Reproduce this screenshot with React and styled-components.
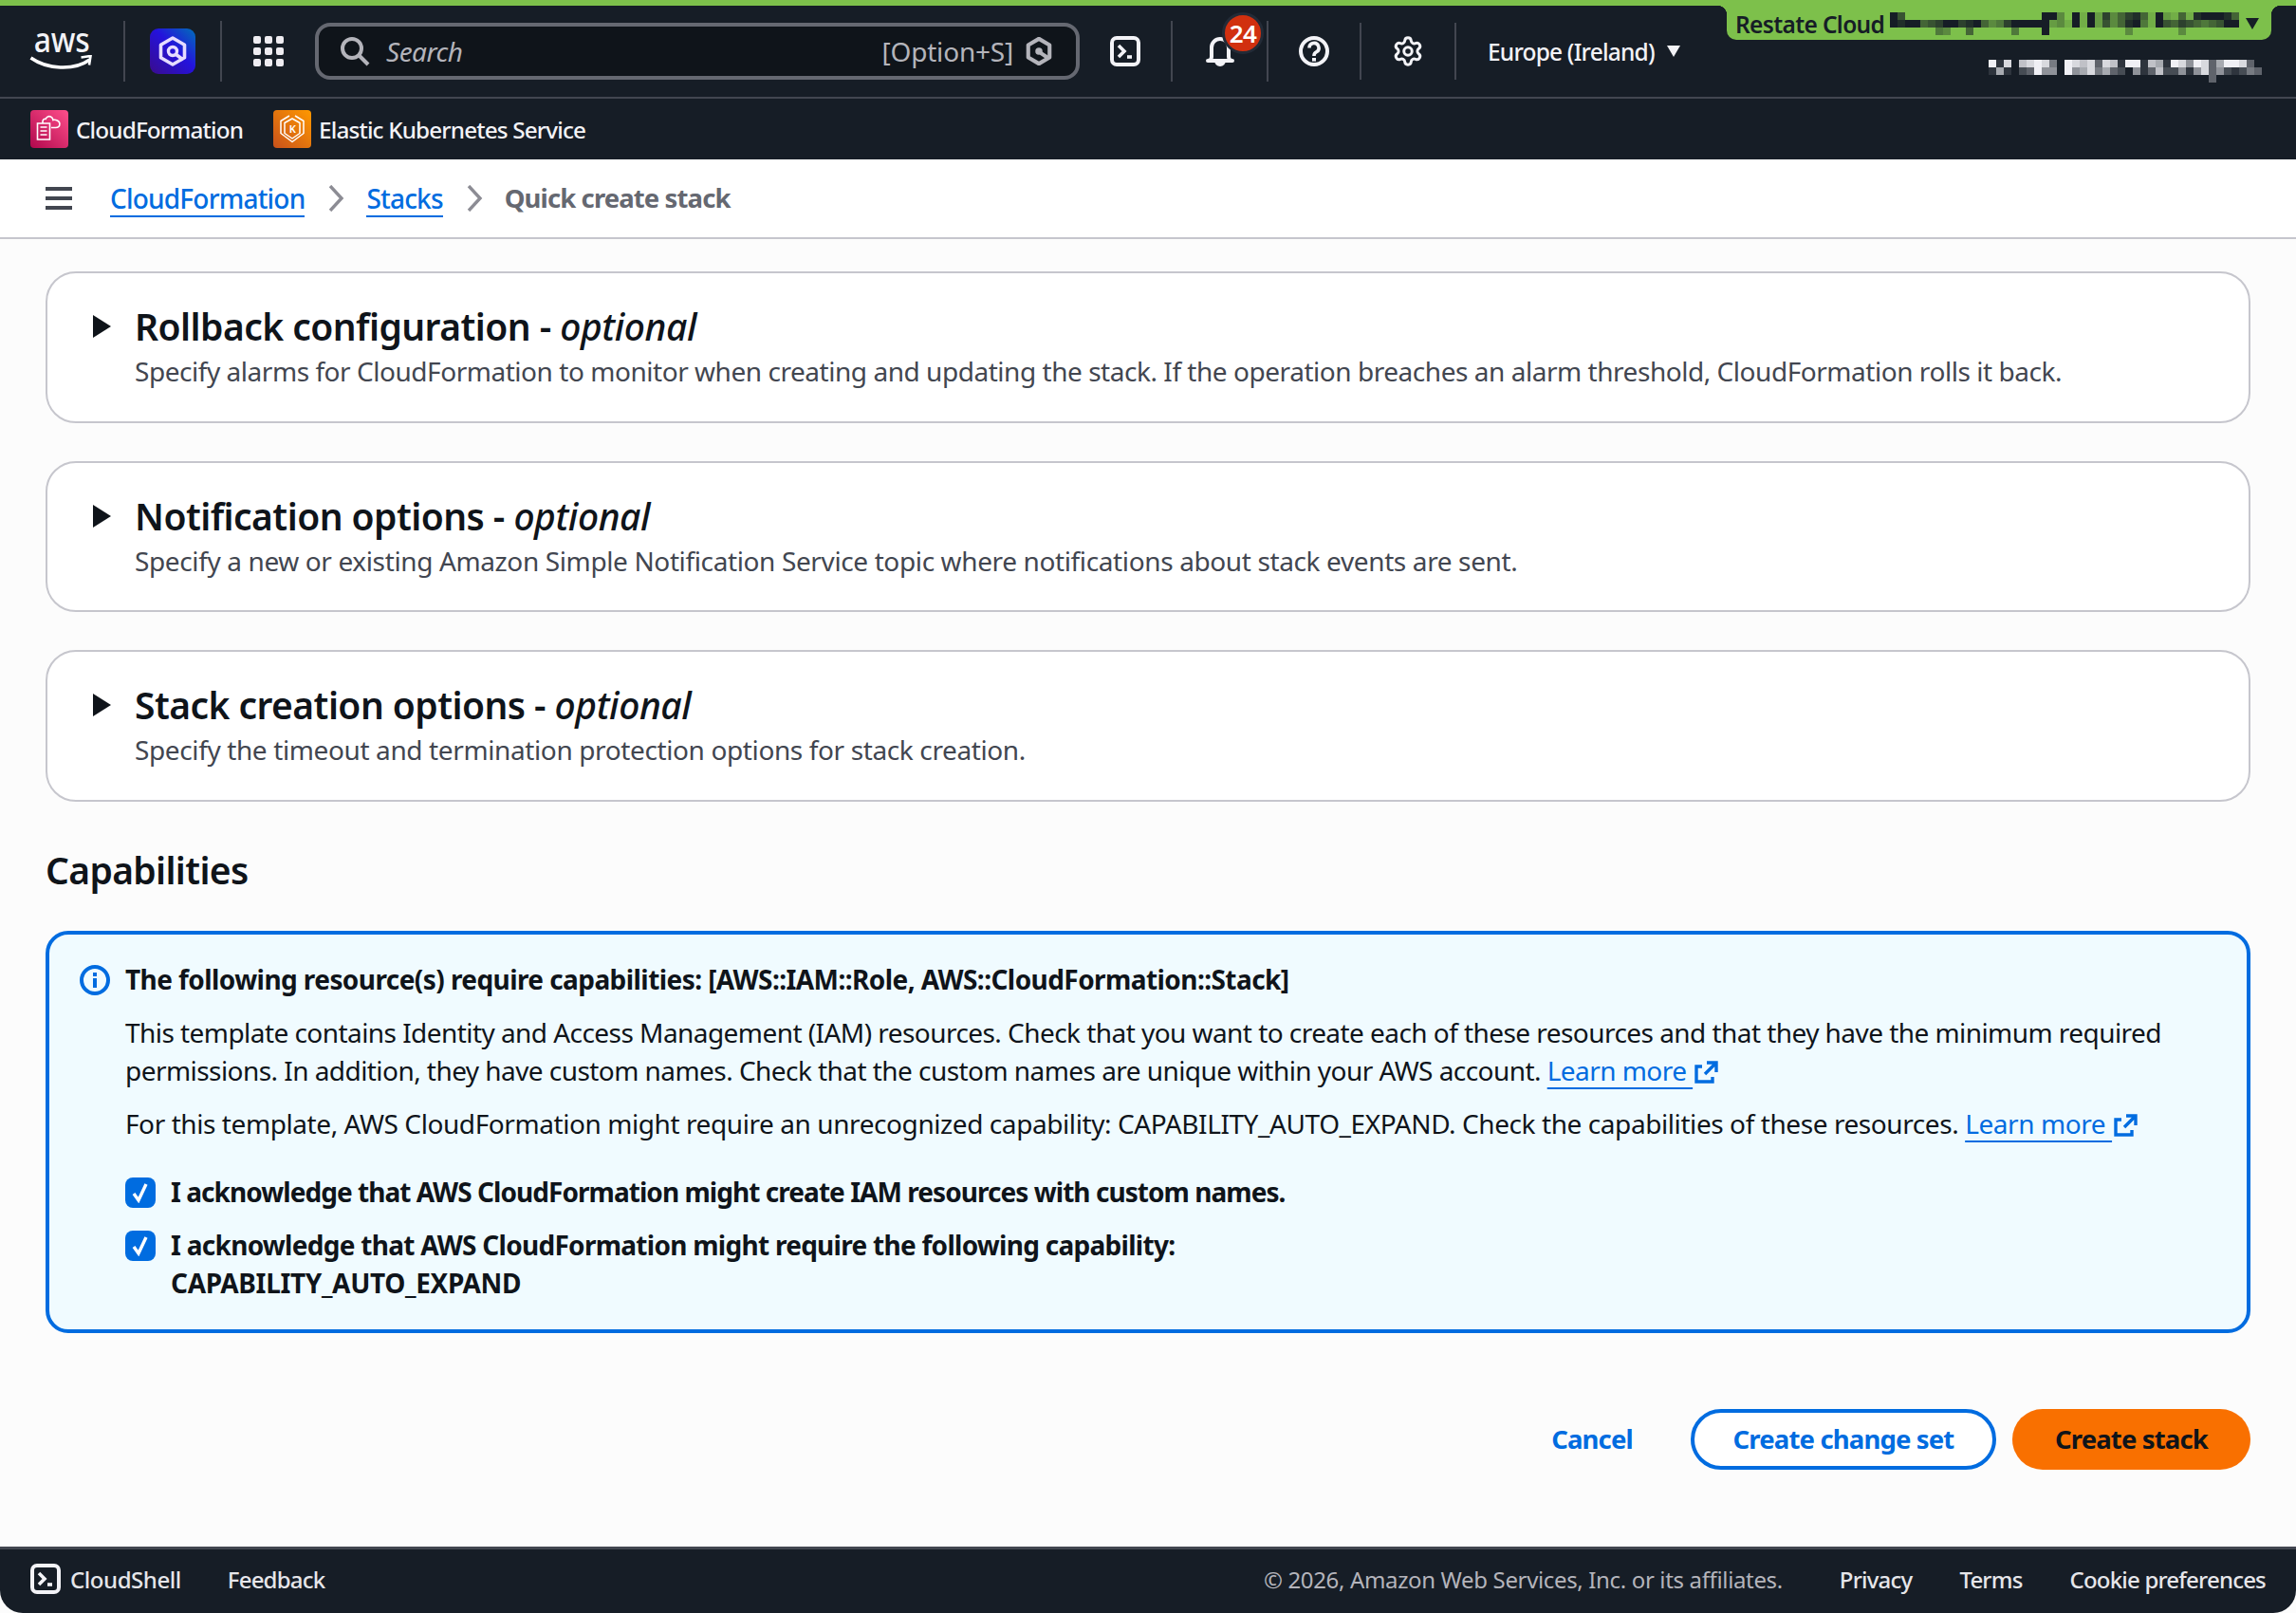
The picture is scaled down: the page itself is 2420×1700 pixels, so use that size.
import React from "react";
import styled, { createGlobalStyle } from "styled-components";
import { Settings } from "lucide-react";

const Global = createGlobalStyle`
  html, body { margin: 0; padding: 0; background: #fff; }
  body { font-family: "Noto Sans", "Open Sans", sans-serif; color: #0f141a; }
  * { box-sizing: border-box; }
`;

const Page = styled.div`
  width: 2420px;
  height: 1700px;
  display: flex;
  flex-direction: column;
  background: #fcfcfc;
  overflow: hidden;
`;

const Header = styled.header`
  background: #161d26;
  color: #f3f3f7;
`;

const TopNav = styled.nav`
  height: 104px;
  border-top: 6px solid #7dc04b;
  border-bottom: 2px solid #424650;
  display: flex;
  align-items: center;
`;

const NavCell = styled.div`
  width: ${(p) => p.$w}px;
  height: ${(p) => (p.$short ? 60 : 64)}px;
  display: flex;
  align-items: center;
  justify-content: center;
  position: relative;
  border-right: ${(p) => (p.$divider ? "2px solid #424650" : "0")};
  flex: none;
`;

const Logo = styled.div`
  display: flex;
  flex-direction: column;
  align-items: center;
  gap: 4px;
  margin-bottom: 6px;
`;

const LogoWord = styled.span`
  font-size: 37px;
  line-height: 26px;
  font-weight: 500;
  letter-spacing: -0.3px;
  color: #f3f3f7;
  transform: scaleX(0.86);
`;

const SearchBox = styled.div`
  width: 806px;
  height: 60px;
  flex: none;
  display: flex;
  align-items: center;
  padding: 0 24px 0 22px;
  background: #0f141a;
  border: 4px solid #656871;
  border-radius: 16px;
  color: #b4b4bb;
  font-size: 28px;
  letter-spacing: -0.5px;
`;

const SearchHint = styled.em`
  margin-left: 17px;
  flex: 1;
`;

const SearchShortcut = styled.span`
  margin-right: 12px;
  letter-spacing: -0.2px;
`;

const Badge = styled.span`
  position: absolute;
  left: 52px;
  top: -9px;
  width: 44px;
  height: 44px;
  border-radius: 50%;
  border: 3px solid #232b37;
  background: #d1300f;
  color: #fff;
  font-size: 26px;
  font-weight: 600;
  letter-spacing: -0.6px;
  display: flex;
  align-items: center;
  justify-content: center;
`;

const Region = styled.div`
  margin-left: 33px;
  display: flex;
  align-items: center;
  gap: 12px;
  font-size: 24.5px;
  letter-spacing: -0.8px;
  font-weight: 500;
`;

const Account = styled.div`
  margin-left: auto;
  align-self: stretch;
  display: flex;
  flex-direction: column;
  align-items: flex-end;
`;

const AccountTab = styled.div`
  position: relative;
  width: 574px;
  height: 36px;
  margin-right: 26px;
  padding: 2px 12px 0 9px;
  background: #7dc04b;
  border-radius: 0 0 10px 10px;
  color: #161d26;
  font-size: 24.5px;
  font-weight: 600;
  letter-spacing: -0.65px;
  display: flex;
  align-items: center;
  gap: 6px;
  white-space: nowrap;
  &::before, &::after {
    content: "";
    position: absolute;
    top: 0;
    width: 10px;
    height: 10px;
  }
  &::before { left: -10px; background: radial-gradient(circle at 0 100%, transparent 10px, #7dc04b 10.5px); }
  &::after { right: -10px; background: radial-gradient(circle at 100% 100%, transparent 10px, #7dc04b 10.5px); }
`;

const AccountName = styled.div`
  margin: 21px 36px 0 0;
  display: flex;
`;

const ServiceBar = styled.div`
  height: 64px;
  display: flex;
  align-items: center;
  padding-left: 32px;
  gap: 32px;
`;

const Service = styled.div`
  display: flex;
  align-items: center;
  gap: 8px;
  font-size: 24.3px;
  font-weight: 500;
  letter-spacing: -0.85px;
`;

const Crumbs = styled.div`
  height: 84px;
  background: #fff;
  border-bottom: 2px solid #c6c6cd;
  display: flex;
  align-items: center;
  padding-left: 48px;
  font-size: 28px;
  letter-spacing: -0.8px;
`;

const Burger = styled.div`
  width: 28px;
  height: 24px;
  margin-right: 40px;
  display: flex;
  flex-direction: column;
  justify-content: space-between;
  & > i { display: block; height: 4px; background: #424650; }
`;

const CrumbLink = styled.a`
  color: #006ce0;
  font-weight: 500;
  border-bottom: 2px solid #006ce0;
  line-height: 36px;
  margin-top: 2px;
`;

const CrumbChevron = styled.svg`
  width: 18px;
  height: 28px;
  margin: 0 23px 0 24px;
  flex: none;
`;

const CrumbCurrent = styled.span`
  color: #656871;
  font-weight: 700;
  font-size: 27.5px;
  letter-spacing: -0.9px;
  margin-bottom: 2px;
`;

const Main = styled.main`
  flex: 1;
  padding: 34px 48px 0;
  display: flex;
  flex-direction: column;
`;

const Cards = styled.div`
  display: flex;
  flex-direction: column;
  gap: 40px;
`;

const Card = styled.section`
  height: 159.5px;
  background: #fff;
  border: 2px solid #c6c6cd;
  border-radius: 32px;
  padding: 32px 0 0 47px;
  display: flex;
  gap: 25px;
`;

const Caret = styled.svg`
  width: 20px;
  height: 24px;
  flex: none;
  margin-top: 12px;
`;

const CardTitle = styled.h2`
  margin: 0;
  font-size: 39px;
  line-height: 48px;
  font-weight: 600;
  letter-spacing: -0.55px;
  & em { font-weight: 500; letter-spacing: -0.45px; }
`;

const CardText = styled.p`
  margin: 3px 0 0;
  font-size: 28px;
  line-height: 40px;
  color: #424650;
  letter-spacing: ${(p) => p.$ls}px;
`;

const Section = styled.h2`
  margin: 48.5px 0 0;
  font-size: 39px;
  line-height: 48px;
  font-weight: 600;
  letter-spacing: -0.65px;
`;

const InfoBox = styled.section`
  margin-top: 40px;
  background: #f0fbff;
  border: 4px solid #006ce0;
  border-radius: 24px;
  padding: 27px 0 28px 32px;
  display: flex;
  gap: 16px;
  height: 424px;
`;

const InfoIcon = styled.svg`
  width: 32px;
  height: 32px;
  flex: none;
  margin-top: 5px;
`;

const InfoBody = styled.div`
  font-size: 28px;
  line-height: 40px;
`;

const InfoTitle = styled.div`
  font-weight: 700;
  letter-spacing: -0.57px;
`;

const InfoPara = styled.p`
  margin: 16px 0 0;
  letter-spacing: ${(p) => p.$ls}px;
`;

const LearnLink = styled.a`
  color: #006ce0;
  white-space: nowrap;
  & > u {
    text-decoration: underline;
    text-decoration-thickness: 2px;
    text-underline-offset: 7px;
  }
`;

const ExtIcon = styled.svg`
  width: 25px;
  height: 24px;
  vertical-align: -3px;
  margin-left: 2px;
`;

const Checks = styled.div`
  margin-top: 32px;
  display: flex;
  flex-direction: column;
  gap: 16px;
`;

const CheckRow = styled.label`
  display: flex;
  gap: 16px;
  font-weight: 700;
  letter-spacing: ${(p) => p.$ls}px;
`;

const CheckBox = styled.span`
  width: 32px;
  height: 32px;
  margin-top: 5px;
  flex: none;
  background: #006ce0;
  border-radius: 8px;
  display: flex;
  align-items: center;
  justify-content: center;
`;

const Capability = styled.span`
  letter-spacing: -0.35px;
`;

const Actions = styled.div`
  margin-top: 80px;
  display: flex;
  justify-content: flex-end;
  align-items: center;
  gap: 17px;
`;

const Button = styled.button`
  height: 64px;
  padding: 0 0 2px;
  width: ${(p) => p.$w}px;
  border-radius: 32px;
  font: 700 27.5px "Noto Sans", sans-serif;
  letter-spacing: -0.85px;
  background: ${(p) => (p.$variant === "primary" ? "#f97000" : p.$variant === "normal" ? "#fff" : "transparent")};
  color: ${(p) => (p.$variant === "primary" ? "#0f141a" : "#006ce0")};
  border: ${(p) => (p.$variant === "normal" ? "4px solid #006ce0" : "0")};
  margin-right: ${(p) => p.$mr || 0}px;
`;

const Footer = styled.footer`
  height: 70px;
  flex: none;
  background: #161d26;
  border-top: 3px solid #424650;
  border-radius: 0 0 24px 24px;
  color: #e6e6ea;
  font-size: 24px;
  font-weight: 500;
  display: flex;
  align-items: center;
  padding: 0 32px 5px;
`;

const FooterShell = styled.span`
  display: flex;
  align-items: center;
  gap: 10px;
  margin-right: 49px;
  letter-spacing: -0.45px;
`;

const FooterRight = styled.div`
  margin-left: auto;
  display: flex;
  align-items: center;
  gap: 50px;
`;

const FooterLink = styled.span`
  letter-spacing: -0.8px;
`;

const Copy = styled.span`
  color: #b4b4bb;
  margin-right: 10px;
  font-weight: 400;
  letter-spacing: -0.35px;
`;

const Shell = ({ s = 32 }) => (
  <svg width={s} height={s} viewBox="0 0 32 32" fill="none" stroke="#f3f3f7" strokeWidth="4">
    <rect x="2" y="2" width="28" height="28" rx="5" />
    <path d="M9 10l6 6-6 6" strokeWidth="3.6" />
    <path d="M18 22h5" strokeWidth="3.6" />
  </svg>
);

const Hex = ({ s, bg }) => (
  <svg width={s} height={s} viewBox="0 0 32 32" fill="none">
    <path d="M16 2l12 7v14l-12 7-12-7V9z" stroke={bg} strokeWidth="4.4" strokeLinejoin="round" />
    <circle cx="16" cy="16" r="4" fill={bg} />
    <path d="M18 18l9 6" stroke={bg} strokeWidth="4.4" />
  </svg>
);

const QIcon = () => (
  <svg width="48" height="48" viewBox="0 0 48 48">
    <defs>
      <linearGradient id="qg" x1="0" y1="1" x2="1" y2="0">
        <stop offset="0" stopColor="#3a0c8c" />
        <stop offset=".55" stopColor="#2412dc" />
        <stop offset="1" stopColor="#0070b8" />
      </linearGradient>
    </defs>
    <rect width="48" height="48" rx="9" fill="url(#qg)" />
    <path d="M24 10l12.5 7.2v13.6L24 38l-12.5-7.2V17.2z" fill="none" stroke="#e6dcff" strokeWidth="3.6" strokeLinejoin="round" />
    <circle cx="24" cy="24" r="4.5" fill="none" stroke="#e6dcff" strokeWidth="3.4" />
    <path d="M27 27l8 6" stroke="#e6dcff" strokeWidth="3.6" />
  </svg>
);

const AwsLogo = () => (
  <Logo>
    <LogoWord>aws</LogoWord>
    <svg width="68" height="16" viewBox="0 0 68 16">
      <path d="M1.5 3c17 12 45 14 62 2" fill="none" stroke="#fff" strokeWidth="3.4" />
      <path d="M54.5 2.5l10-1.5-1.5 9.5" fill="none" stroke="#fff" strokeWidth="2.6" />
    </svg>
  </Logo>
);

const GridIcon = () => (
  <svg width="32" height="32" viewBox="0 0 32 32" fill="#eeecf1">
    {[0, 12, 24].flatMap((y) =>
      [0, 12, 24].map((x) => <rect key={`${x}-${y}`} x={x} y={y} width="8" height="8" rx="2" />)
    )}
  </svg>
);

const SearchIcon = () => (
  <svg width="32" height="32" viewBox="0 0 32 32" fill="none" stroke="#b4b4bb" strokeWidth="4">
    <circle cx="13" cy="13" r="10" />
    <path d="M20.5 20.5L30 30" />
  </svg>
);

const Bell = () => (
  <svg width="32" height="32" viewBox="0 0 32 32" fill="none" stroke="#f3f3f7" strokeWidth="4" strokeLinejoin="round">
    <path d="M25 22V12C25 7 21 3 16 3S7 7 7 12v10c0 2.2-1.8 4-4 4h26c-2.2 0-4-1.8-4-4z" />
    <path d="M20 26c0 2.2-1.8 4-4 4s-4-1.8-4-4" />
  </svg>
);

const Help = () => (
  <svg width="32" height="32" viewBox="0 0 32 32" fill="none" stroke="#f3f3f7" strokeWidth="4">
    <circle cx="16" cy="16" r="14" />
    <path d="M11 12.5a5 5 0 1 1 7.5 4.3c-1.6.9-2.5 2-2.5 3.7v.5" strokeWidth="3.6" />
    <rect x="14" y="23" width="4" height="3.6" fill="#f3f3f7" stroke="none" />
  </svg>
);

const CfnIcon = () => (
  <svg width="40" height="40" viewBox="0 0 40 40">
    <defs>
      <linearGradient id="cg" x1="0" y1="1" x2="1" y2="0">
        <stop offset="0" stopColor="#b0084d" />
        <stop offset="1" stopColor="#ff4f8b" />
      </linearGradient>
    </defs>
    <rect width="40" height="40" rx="4" fill="url(#cg)" />
    <g fill="none" stroke="#fff" strokeWidth="1.6">
      <path d="M7.5 14h13v17h-13z" />
      <path d="M10.5 18h7M10.5 22h7M10.5 26h7" />
      <path d="M13 14v-2c0-2 1.5-3 3.2-2.6C17 7 19.5 6 21.5 7c1.6.8 2.4 2 2.4 3.5 2.5-.6 7 .5 7 4 0 2.8-2.2 4-4.2 4H22" />
    </g>
  </svg>
);

const EksIcon = () => (
  <svg width="40" height="40" viewBox="0 0 40 40">
    <defs>
      <linearGradient id="eg" x1="0" y1="1" x2="1" y2="0">
        <stop offset="0" stopColor="#c8511b" />
        <stop offset="1" stopColor="#ff9900" />
      </linearGradient>
    </defs>
    <rect width="40" height="40" rx="4" fill="url(#eg)" />
    <g fill="none" stroke="#fff" strokeWidth="1.5" strokeLinejoin="round">
      <path d="M17 6l-9 5.5v13l4 3" />
      <path d="M23 6l9 5.5v13l-12 9-8-6" />
      <path d="M20 9l8 4.5v11L20 30l-8-5.5v-11z" />
    </g>
    <text x="20" y="24" textAnchor="middle" fontFamily="Noto Sans, sans-serif" fontSize="11" fontWeight="600" fill="#fff">K</text>
  </svg>
);

const ExtLink = () => (
  <ExtIcon viewBox="0 0 25 24" fill="none" stroke="#006ce0" strokeWidth="3.4">
    <path d="M8 6H2v16h17v-5" />
    <path d="M13 2h10v10M22.5 2.5L11 14" />
  </ExtIcon>
);

const Learn = () => (
  <LearnLink>
    <u>Learn more&nbsp;</u>
    <ExtLink />
  </LearnLink>
);

const mix = (from, to, k) => `rgb(${from.map((c, i) => Math.round(c + (to[i] - c) * k)).join(",")})`;

const Mosaic = ({ rows, from, to, cell = 8 }) => (
  <svg width={rows[0].length * cell} height={rows.length * cell}>
    {rows.flatMap((r, y) =>
      [...r].map((ch, x) =>
        ch === "0" ? null : (
          <rect key={`${x}-${y}`} x={x * cell} y={y * cell} width={cell} height={cell} fill={mix(from, to, Number(ch) / 9)} />
        )
      )
    )}
  </svg>
);

const TAB_ROWS = [
  "9600000000000000000099309192735785192151899985",
  "9899567997895347999992319192635894196576545699",
  "0000004300500000400090000000000300000030000000",
];

const NAME_ROWS = [
  "918078984098783871991761985983699830",
  "161023955095684632051372251583521243",
  "000000000000000000000000000003000000",
];

const Caret2 = ({ color = "#f3f3f7", w = 16 }) => (
  <svg width={w} height="12" viewBox="0 0 16 12">
    <path d="M1 0h14L8 12z" fill={color} />
  </svg>
);

const ExpandCard = ({ title, text, ls }) => (
  <Card>
    <Caret viewBox="0 0 20 24">
      <path d="M1 0l19 12L1 24z" fill="#0f141a" />
    </Caret>
    <div>
      <CardTitle>
        {title} - <em>optional</em>
      </CardTitle>
      <CardText $ls={ls}>{text}</CardText>
    </div>
  </Card>
);

const Check = () => (
  <CheckBox>
    <svg width="20" height="22" viewBox="0 0 20 22" fill="none" stroke="#fff" strokeWidth="3.4">
      <path d="M3 12l5 7 8-17" />
    </svg>
  </CheckBox>
);

export default function App() {
  return (
    <Page>
      <Global />
      <Header>
        <TopNav>
          <NavCell $w={132} $divider><AwsLogo /></NavCell>
          <NavCell $w={102} $divider><QIcon /></NavCell>
          <NavCell $w={98}><GridIcon /></NavCell>
          <SearchBox>
            <SearchIcon />
            <SearchHint>Search</SearchHint>
            <SearchShortcut>[Option+S]</SearchShortcut>
            <Hex s={30} bg="#b4b4bb" />
          </SearchBox>
          <NavCell $w={98} $divider><Shell /></NavCell>
          <NavCell $w={101} $divider>
            <Bell />
            <Badge>24</Badge>
          </NavCell>
          <NavCell $w={98} $divider $short><Help /></NavCell>
          <NavCell $w={100} $divider $short>
            <Settings size={34} color="#f3f3f7" strokeWidth={2.1} />
          </NavCell>
          <Region>
            Europe (Ireland)
            <Caret2 />
          </Region>
          <Account>
            <AccountTab>
              Restate Cloud
              <Mosaic rows={TAB_ROWS} from={[125, 192, 75]} to={[22, 29, 38]} />
              <Caret2 color="#161d26" />
            </AccountTab>
            <AccountName>
              <Mosaic rows={NAME_ROWS} from={[22, 29, 38]} to={[240, 240, 245]} />
            </AccountName>
          </Account>
        </TopNav>
        <ServiceBar>
          <Service><CfnIcon />CloudFormation</Service>
          <Service><EksIcon />Elastic Kubernetes Service</Service>
        </ServiceBar>
      </Header>
      <Crumbs>
        <Burger><i /><i /><i /></Burger>
        <CrumbLink>CloudFormation</CrumbLink>
        <CrumbChevron viewBox="0 0 18 28" fill="none" stroke="#8c8c94" strokeWidth="3.4"><path d="M3 1l12 13L3 27" /></CrumbChevron>
        <CrumbLink>Stacks</CrumbLink>
        <CrumbChevron viewBox="0 0 18 28" fill="none" stroke="#8c8c94" strokeWidth="3.4"><path d="M3 1l12 13L3 27" /></CrumbChevron>
        <CrumbCurrent>Quick create stack</CrumbCurrent>
      </Crumbs>
      <Main>
        <Cards>
          <ExpandCard ls={-0.46} title="Rollback configuration" text="Specify alarms for CloudFormation to monitor when creating and updating the stack. If the operation breaches an alarm threshold, CloudFormation rolls it back." />
          <ExpandCard ls={-0.375} title="Notification options" text="Specify a new or existing Amazon Simple Notification Service topic where notifications about stack events are sent." />
          <ExpandCard ls={-0.38} title="Stack creation options" text="Specify the timeout and termination protection options for stack creation." />
        </Cards>
        <Section>Capabilities</Section>
        <InfoBox>
          <InfoIcon viewBox="0 0 32 32" fill="none" stroke="#006ce0" strokeWidth="4">
            <circle cx="16" cy="16" r="14" />
            <path d="M16 14v10M16 8v4" />
          </InfoIcon>
          <InfoBody>
            <InfoTitle>The following resource(s) require capabilities: [AWS::IAM::Role, AWS::CloudFormation::Stack]</InfoTitle>
            <InfoPara $ls={-0.555}>
              This template contains Identity and Access Management (IAM) resources. Check that you want to create each of these resources and that they have the minimum required permissions. In addition, they have custom names. Check that the custom names are unique within your AWS account. <Learn />
            </InfoPara>
            <InfoPara $ls={-0.42}>
              For this template, AWS CloudFormation might require an unrecognized capability: CAPABILITY_AUTO_EXPAND. Check the capabilities of these resources. <Learn />
            </InfoPara>
            <Checks>
              <CheckRow $ls={-0.95}><Check />I acknowledge that AWS CloudFormation might create IAM resources with custom names.</CheckRow>
              <CheckRow $ls={-0.72}>
                <Check />
                <span>I acknowledge that AWS CloudFormation might require the following capability:<br /><Capability>CAPABILITY_AUTO_EXPAND</Capability></span>
              </CheckRow>
            </Checks>
          </InfoBody>
        </InfoBox>
        <Actions>
          <Button $w={150} $mr={12}>Cancel</Button>
          <Button $w={322} $variant="normal">Create change set</Button>
          <Button $w={251} $variant="primary">Create stack</Button>
        </Actions>
      </Main>
      <Footer>
        <FooterShell><Shell />CloudShell</FooterShell>
        <FooterLink>Feedback</FooterLink>
        <FooterRight>
          <Copy>© 2026, Amazon Web Services, Inc. or its affiliates.</Copy>
          <FooterLink>Privacy</FooterLink>
          <FooterLink>Terms</FooterLink>
          <FooterLink>Cookie preferences</FooterLink>
        </FooterRight>
      </Footer>
    </Page>
  );
}
